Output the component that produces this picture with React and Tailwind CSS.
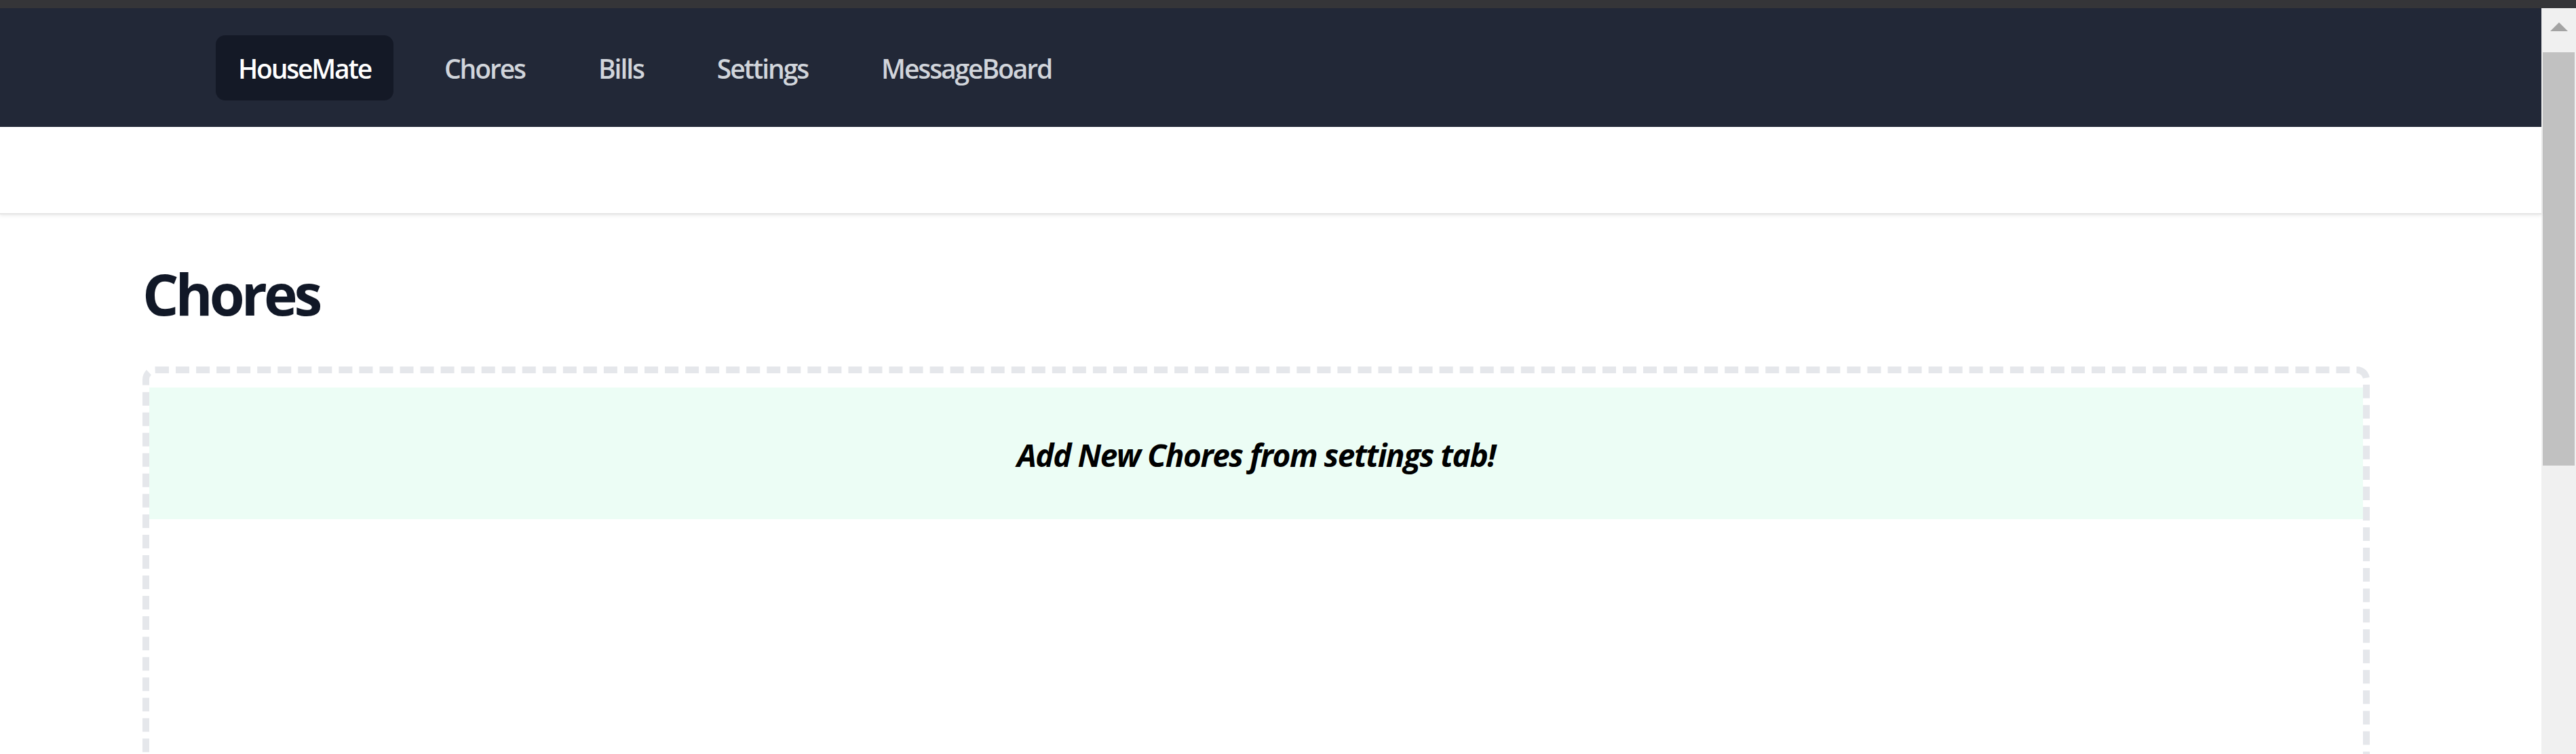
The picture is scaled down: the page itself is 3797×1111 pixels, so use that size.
const links = ["Chores", "Bills", "Settings", "MessageBoard"];

function Scrollbar() {
  return (
    <div className="w-[51px] shrink-0 bg-[#f0f0f0] flex flex-col items-center">
      <div className="h-[65px] w-full flex justify-center pt-[21px]">
        <svg width="26" height="13" viewBox="0 0 26 13">
          <polygon points="13,0 26,13 0,13" fill="#a3a3a3" />
        </svg>
      </div>
      <div className="w-[47px] h-[609px] bg-[#c1c1c1]" />
    </div>
  );
}

export default function App() {
  return (
    <div className="h-[1111px] w-full flex flex-col overflow-hidden bg-white font-['Open_Sans',_'Noto_Sans',_sans-serif]">
      <div className="h-[12px] shrink-0 bg-[#353538]" />
      <div className="flex flex-1 min-h-0">
        <div className="flex-1 min-w-0 flex flex-col">
          <nav className="h-[175px] shrink-0 bg-[#222837] flex items-center pl-[318px] gap-[42px]">
            <a className="h-[96px] px-[33px] pt-[4px] flex items-center rounded-[14px] bg-[#141926] text-white text-[39px] font-semibold tracking-[-2.2px]">
              HouseMate
            </a>
            {links.map((l) => (
              <a key={l} className="h-[96px] px-[33px] pt-[4px] flex items-center text-[#d1d5db] text-[39px] font-semibold tracking-[-2.1px]">
                {l}
              </a>
            ))}
          </nav>

          <header className="h-[129px] shrink-0 bg-white border-b-2 border-[#e6e6e6] shadow-[0_2px_5px_rgba(0,0,0,0.08)] relative z-10" />

          <main className="pl-[210px] pr-[253px]">
            <h1 className="mt-[75px] text-[84px] leading-none font-bold text-[#111827] tracking-[-5px]">Chores</h1>
            <div className="mt-[65px] h-[700px] border-[10px] border-dashed border-[#e5e7eb] rounded-[19px] pt-[21px]">
              <div className="h-[194px] bg-[#ecfdf5] flex items-center justify-center">
                <p className="mt-[5px] text-[46px] font-bold italic text-black tracking-[-1.5px]">Add New Chores from settings tab!</p>
              </div>
            </div>
          </main>
        </div>
        <Scrollbar />
      </div>
    </div>
  );
}
